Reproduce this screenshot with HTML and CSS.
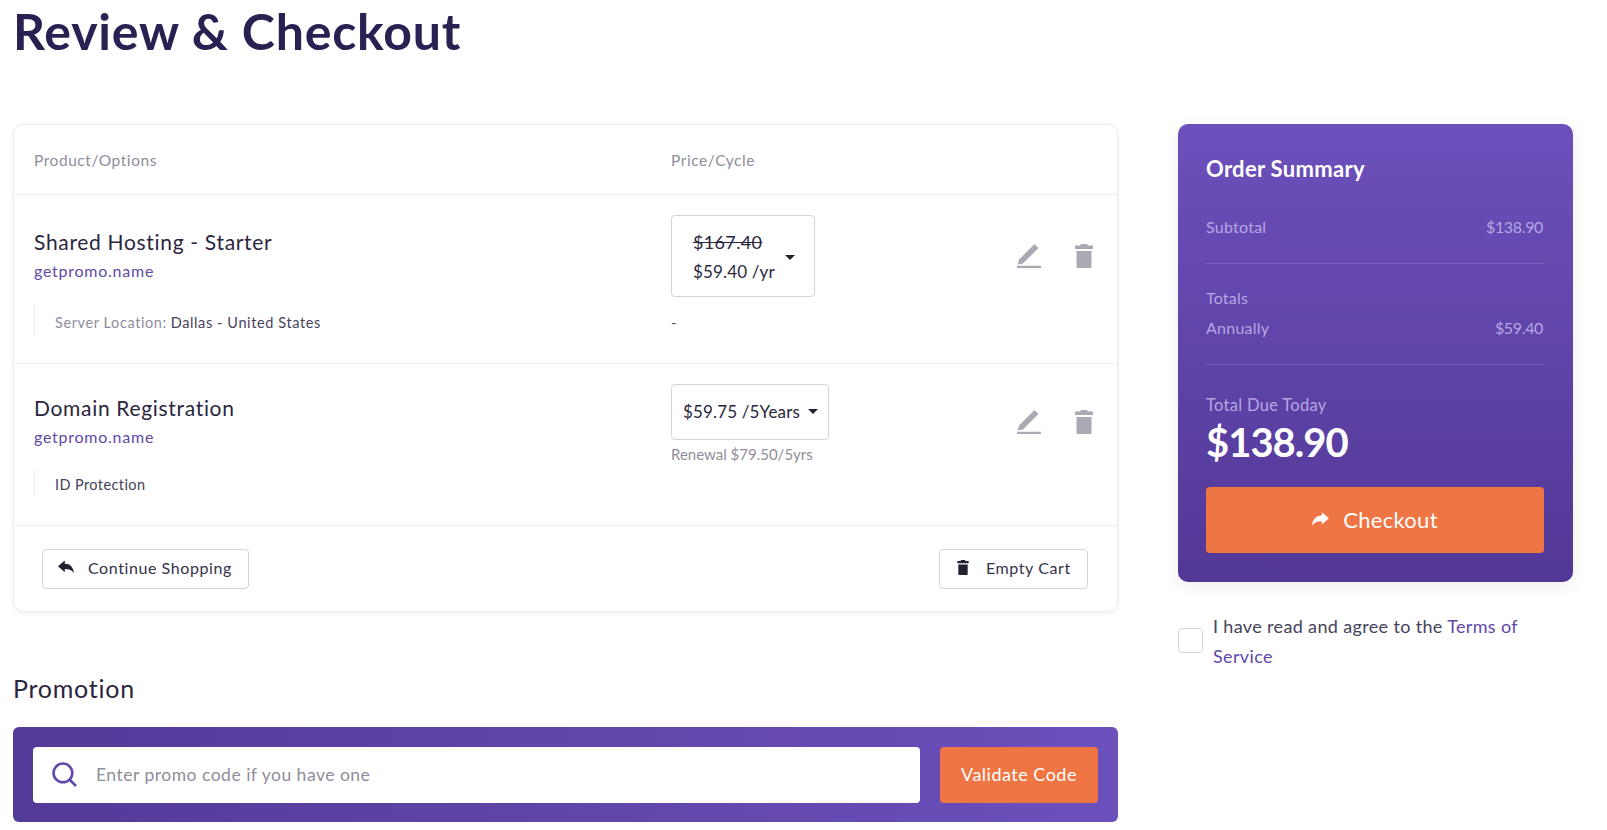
FILE: index.html
```html
<!DOCTYPE html>
<html lang="en">
<head>
<meta charset="utf-8">
<title>Review &amp; Checkout</title>
<link rel="stylesheet" href="styles.css">
</head>
<body>
<svg class="defs" aria-hidden="true">
  <symbol id="i-trash" viewBox="0 0 18 24"><path d="M6 0h6l1 1.500h5V5H0V1.500h5zM1.500 7h15v15.500a1.500 1.500 0 0 1-1.500 1.500H3a1.500 1.500 0 0 1-1.500-1.500z"/></symbol>
  <symbol id="i-pen" viewBox="0 0 24 24"><path d="M17.500 0l4 4L6 19.500l-5.200 1L2 15.500zM0 21.700h24V24H0z"/></symbol>
</svg>
<main class="page">
  <h1 class="title">Review &amp; Checkout</h1>
  <div class="layout">
    <section class="main">
      <div class="cart">
        <div class="row head">
          <div>Product/Options</div>
          <div>Price/Cycle</div>
        </div>
        <div class="row item item-one">
          <div class="product">
            <div class="name">Shared Hosting - Starter</div>
            <a class="domain">getpromo.name</a>
            <div class="option"><span class="muted">Server Location:</span> Dallas - United States</div>
          </div>
          <div class="price">
            <div class="select select-tall">
              <div class="select-text"><s>$167.40</s><br>$59.40 /yr</div>
              <span class="caret"></span>
            </div>
            <div class="dash">-</div>
          </div>
          <div class="actions">
            <svg class="pen"><use href="#i-pen"/></svg>
            <svg class="bin"><use href="#i-trash"/></svg>
          </div>
        </div>
        <div class="row item item-two">
          <div class="product">
            <div class="name">Domain Registration</div>
            <a class="domain">getpromo.name</a>
            <div class="option">ID Protection</div>
          </div>
          <div class="price">
            <div class="select select-short">
              <div class="select-text">$59.75 /5Years</div>
              <span class="caret"></span>
            </div>
            <div class="renewal">Renewal $79.50/5yrs</div>
          </div>
          <div class="actions">
            <svg class="pen"><use href="#i-pen"/></svg>
            <svg class="bin"><use href="#i-trash"/></svg>
          </div>
        </div>
        <div class="cart-foot">
          <a class="btn btn-continue">
            <svg class="btn-icon reply" viewBox="0 0 20 16"><path d="M0 7L8.500 0v4C15 4 19 8 20 15.500 17 11.500 13 10.500 8.500 10.500V14.500z"/></svg>
            Continue Shopping
          </a>
          <a class="btn btn-empty">
            <svg class="btn-icon small-bin"><use href="#i-trash"/></svg>
            Empty Cart
          </a>
        </div>
      </div>
      <h2 class="promo-title">Promotion</h2>
      <div class="promo">
        <div class="promo-input">
          <svg class="search" viewBox="0 0 24 24" fill="none"><circle cx="10.500" cy="10.500" r="9"/><path d="M17 17l6 6"/></svg>
          <span class="placeholder">Enter promo code if you have one</span>
        </div>
        <a class="validate">Validate Code</a>
      </div>
    </section>
    <aside class="side">
      <div class="summary">
        <h3 class="summary-title">Order Summary</h3>
        <div class="line line-sub"><span>Subtotal</span><span class="value">$138.90</span></div>
        <div class="rule"></div>
        <div class="totals-label">Totals</div>
        <div class="line line-annual"><span>Annually</span><span class="value">$59.40</span></div>
        <div class="rule"></div>
        <div class="due-label">Total Due Today</div>
        <div class="due">$138.90</div>
        <a class="checkout">
          <svg class="checkout-icon" viewBox="0 0 20 16"><path d="M20 7L11.500 0v4C5 4 1 8 0 15.500 3 11.500 7 10.500 11.500 10.500V14.500z"/></svg>
          Checkout
        </a>
      </div>
      <div class="terms">
        <span class="checkbox"></span>
        <p class="terms-text">I have read and agree to the <a>Terms of Service</a></p>
      </div>
    </aside>
  </div>
</main>
</body>
</html>
```
FILE: styles.css
```css
* { box-sizing: border-box; }
html, body { margin: 0; padding: 0; height: 830px; overflow: hidden; background: #fff; }
body { font-family: "Lato", "Noto Sans", sans-serif; color: #2a2640; }
.defs { position: absolute; width: 0; height: 0; }
.page { padding: 0 34px 0 13px; }
.title { margin: 0; height: 124px; padding-top: 2px; font-size: 50px; line-height: 58px; font-weight: 700; color: #2a2152; letter-spacing: .8px; }
.layout { display: flex; gap: 60px; align-items: flex-start; }
.main { width: 1105px; }
.side { width: 395px; }

.cart { height: 488px; border: 1px solid #ececf0; border-radius: 10px; box-shadow: 0 1px 5px rgba(40, 30, 80, .06); }
.row { display: grid; grid-template-columns: 637px 1fr auto; padding: 0 20px; border-bottom: 1px solid #f1f1f3; }
.head { height: 70px; align-items: center; font-size: 15.500px; letter-spacing: .55px; color: #8f8d9b; }
.item { font-size: 16px; }
.item-one { height: 169px; padding-top: 20px; }
.item-two { height: 162px; padding-top: 20px; }
.name { font-size: 21px; line-height: 30px; letter-spacing: .68px; color: #2a2640; }
.item-one .name { margin-top: 12px; }
.item-two .name { margin-top: 9px; }
.domain { display: block; font-size: 16px; line-height: 28px; letter-spacing: .75px; color: #5f49a8; }
.option { border-left: 1px solid #eeeef1; padding: 3px 0 0 20px; font-size: 14.500px; letter-spacing: .6px; color: #45425a; display: flex; align-items: center; gap: 4px; }
.item-one .option { margin-top: 21px; height: 29px; }
.item-two .option { margin-top: 19px; height: 25px; letter-spacing: .4px; }
.muted { color: #8f8d9b; }
.select { display: flex; align-items: center; border: 1px solid #d6d6da; border-radius: 4px; }
.select-tall { width: 144px; height: 82px; padding: 2px 0 0 21px; font-size: 17px; line-height: 29px; }
.select-tall s { font-size: 18px; letter-spacing: .35px; }
.select-short { width: 158px; height: 56px; padding: 0 0 2px 11px; font-size: 17px; }
.select-text { letter-spacing: .15px; color: #2a2640; white-space: nowrap; }
.caret { border-top: 5px solid #23212f; border-left: 5.500px solid transparent; border-right: 5.500px solid transparent; }
.select-tall .caret { margin-left: 10px; }
.select-short .caret { margin-left: 8px; }
.dash { margin-top: 13px; font-size: 15px; line-height: 24px; color: #55525f; }
.renewal { margin-top: 2px; font-size: 15px; line-height: 24px; letter-spacing: 0; color: #8f8d9b; }
.actions { display: flex; align-items: flex-start; gap: 34px; padding-right: 4px; }
.item-one .actions { padding-top: 29px; }
.item-two .actions { padding-top: 26px; }
.pen { width: 24px; height: 24px; fill: #aaaab4; }
.bin { width: 18px; height: 24px; fill: #aaaab4; }

.cart-foot { display: flex; justify-content: space-between; padding: 23px 29px 0 28px; }
.btn { display: flex; align-items: center; height: 40px; padding-bottom: 4px; border: 1px solid #d6d6da; border-radius: 4px; font-size: 16px; letter-spacing: .58px; color: #35324a; }
.btn-continue { width: 207px; padding-left: 15px; }
.btn-empty { width: 149px; padding-left: 17px; }
.btn-icon { fill: #23212f; flex: none; }
.reply { width: 16px; height: 14px; margin-right: 14px; }
.small-bin { width: 12px; height: 15px; margin-right: 17px; }

.promo-title { margin: 60px 0 0; height: 55px; font-size: 25px; line-height: 32px; font-weight: 400; letter-spacing: .75px; color: #2a2640; }
.promo { display: flex; gap: 20px; height: 95px; padding: 20px 20px 19px; border-radius: 6px; background: linear-gradient(90deg, #533a98, #6c50bc); }
.promo-input { display: flex; align-items: center; flex: 1; border-radius: 4px; background: #fff; padding: 0 0 2px 19px; }
.search { width: 25px; height: 25px; stroke: #5f47ab; stroke-width: 2.500; margin-right: 19px; flex: none; }
.placeholder { font-size: 17.500px; letter-spacing: .5px; color: #8f8d9b; }
.validate { display: flex; align-items: center; justify-content: center; width: 158px; padding-bottom: 2px; border-radius: 4px; background: #ef7544; color: #fff; font-size: 18px; letter-spacing: .5px; }

.summary { height: 458px; padding: 30px 29px 0 28px; border-radius: 10px; background: linear-gradient(180deg, #6c50bc, #523896); color: #b5a7e2; box-shadow: 0 4px 16px rgba(40, 30, 80, .08); }
.summary-title { margin: 0; font-size: 22px; line-height: 30px; font-weight: 700; letter-spacing: .3px; color: #fff; }
.line { display: flex; justify-content: space-between; font-size: 16px; line-height: 24px; letter-spacing: .25px; padding-right: 1px; }
.value { letter-spacing: -.35px; }
.line-sub { margin-top: 31px; }
.rule { height: 1px; background: rgba(255, 255, 255, .14); }
.line-sub + .rule { margin-top: 24px; }
.totals-label { margin-top: 22px; font-size: 16px; line-height: 24px; letter-spacing: .2px; }
.line-annual { margin-top: 6px; }
.line-annual + .rule { margin-top: 24px; }
.due-label { margin-top: 28px; font-size: 16.500px; line-height: 24px; letter-spacing: .3px; }
.due { margin-top: -1px; font-size: 40px; line-height: 52px; font-weight: 700; letter-spacing: -1px; color: #fff; }
.checkout { display: flex; align-items: center; justify-content: center; height: 66px; margin-top: 19px; padding-bottom: 2px; border-radius: 4px; background: #ef7544; color: #fff; font-size: 22px; letter-spacing: .3px; }
.checkout-icon { width: 17px; height: 14px; margin-right: 14px; fill: #fff; }

.terms { display: flex; gap: 10px; margin-top: 29px; }
.checkbox { flex: none; width: 25px; height: 25px; margin-top: 17px; border: 1px solid #d6d6da; border-radius: 4px; }
.terms-text { margin: 0; font-size: 18px; line-height: 30px; letter-spacing: .35px; color: #45425a; }
.terms-text a { color: #5f47ab; }
```
